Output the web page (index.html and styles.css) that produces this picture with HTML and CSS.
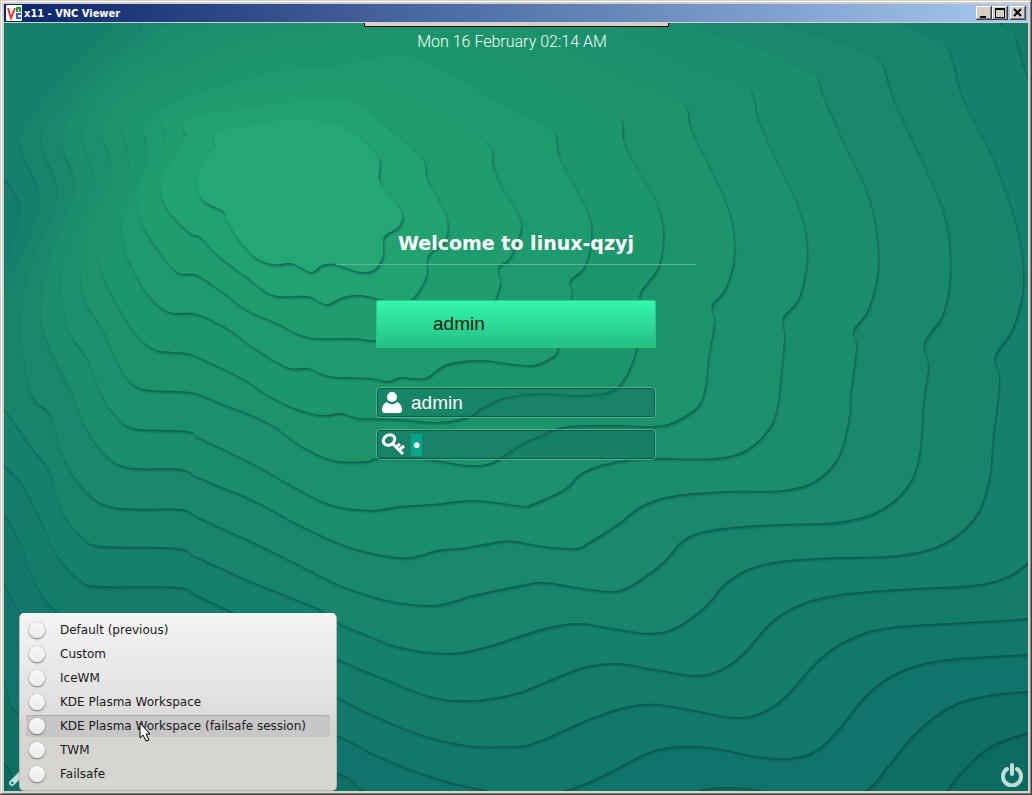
FILE: index.html
```html
<!DOCTYPE html>
<html lang="en">
<head>
    <meta charset="UTF-8">
    <title>x11 - VNC Viewer</title>
    <link rel="stylesheet" href="styles.css">
</head>

<body>
    <div class="window">
        <header class="titlebar">
            <svg class="logo" viewBox="0 0 16 16" aria-hidden="true">
                <rect width="16" height="16" rx="1" fill="#fff" />
                <path d="M2 3l3 10 4-10" fill="none" stroke="#f03030" stroke-width="2" />
                <path d="M11 7V3h3v4" fill="none" stroke="#18a030" stroke-width="2" />
                <path d="M15 9h-4v4h4" fill="none" stroke="#3060e8" stroke-width="2" />
            </svg>
            <h1>x11 - VNC Viewer</h1>
            <div class="window-buttons">
                <button type="button" aria-label="Minimize"><svg viewBox="0 0 12 10"><path d="M2 9h6" /></svg></button>
                <button type="button" aria-label="Maximize"><svg viewBox="0 0 12 10"><path d="M1 1h9M1 0v9h9V0" stroke-width="1" transform="translate(.5 .5)" /><path d="M1 1h10" /></svg></button>
                <button type="button" class="close" aria-label="Close"><svg viewBox="0 0 12 10"><path d="M2 1l7 7M9 1l-7 7" /></svg></button>
            </div>
        </header>

        <main class="desktop">
            <svg class="wallpaper" viewBox="4 23 1024 768" preserveAspectRatio="xMidYMid slice" aria-hidden="true"></svg>
            <div class="viewer-tab"></div>
            <p class="clock">Mon 16 February 02:14 AM</p>

            <form class="login">
                <h2>Welcome to linux-qzyj</h2>
                <button type="button" class="user">admin</button>
                <label class="field">
                    <svg viewBox="0 0 24 24" aria-label="User name">
                        <circle cx="11" cy="6" r="5" />
                        <path d="M6 11c3 3 7 3 10 0 3 1 5 4 5 8 0 2-1 3-3 3H4c-2 0-3-1-3-3 0-4 2-7 5-8z" />
                    </svg>
                    <input type="text" value="admin">
                </label>
                <label class="field">
                    <svg viewBox="0 0 24 24" aria-label="Password">
                        <ellipse cx="8" cy="7" rx="6" ry="5" transform="rotate(-35 8 7)" fill="none" stroke="#fff" stroke-width="3" />
                        <path d="M11 10l11 11M18 17l5-4M15 14l4-3" fill="none" stroke="#fff" stroke-width="3" />
                    </svg>
                    <input type="password" class="password" value="a">
                </label>
            </form>

            <footer class="panel">
                <button type="button" aria-label="Session type">
                    <svg viewBox="0 0 24 24"><path d="M4 20L20 4" stroke-width="6" /><circle cx="4" cy="20" r="1" class="hole" /></svg>
                </button>
                <button type="button" aria-label="Shut down">
                    <svg viewBox="0 0 24 24"><path d="M7 6a9 9 0 1 0 10 0M12 2v9" stroke-width="4" /></svg>
                </button>
            </footer>

            <div class="menu" role="group" aria-label="Session type">
                <label><input type="radio" name="session">Default (previous)</label>
                <label><input type="radio" name="session">Custom</label>
                <label><input type="radio" name="session">IceWM</label>
                <label><input type="radio" name="session">KDE Plasma Workspace</label>
                <label class="active"><input type="radio" name="session">KDE Plasma Workspace (failsafe session)</label>
                <label><input type="radio" name="session">TWM</label>
                <label><input type="radio" name="session">Failsafe</label>
                <svg class="pointer" viewBox="0 0 12 20" aria-hidden="true">
                    <path d="M1 1v15l3-3 3 6 3-1-3-6h4z" fill="#fff" stroke="#000" />
                </svg>
            </div>
        </main>
    </div>
    <script src="wallpaper.js"></script>
</body>
</html>
```
FILE: styles.css
```css
* {
    box-sizing: border-box;
}

body {
    margin: 0;
}

button {
    border: none;
    padding: 0;
}

.window {
    display: flex;
    flex-direction: column;
    height: 100vh;
    padding: 4px;
    background-color: #d4d0c8;
    box-shadow: inset -1px -1px #404040, inset 1px 1px #d4d0c8, inset -2px -2px #808080, inset 2px 2px #ffffff;
}

.titlebar {
    display: flex;
    align-items: center;
    height: 18px;
    padding: 0 2px;
    margin-bottom: 1px;
    background: linear-gradient(to right, #0a246a, #a6caf0);
}

.titlebar h1 {
    flex: 1;
    margin: 0 0 0 2px;
    font: bold 11px "DejaVu Sans Condensed", "DejaVu Sans", sans-serif;
    color: #ffffff;
}

.logo {
    width: 16px;
    height: 16px;
}

.window-buttons {
    display: flex;
}

.window-buttons button {
    width: 16px;
    height: 14px;
    padding: 1px;
    background-color: #d4d0c8;
    box-shadow: inset -1px -1px #404040, inset 1px 1px #ffffff, inset -2px -2px #808080;
}

.window-buttons .close {
    margin-left: 2px;
}

.window-buttons svg {
    display: block;
    width: 12px;
    height: 10px;
    margin-left: 1px;
    fill: none;
    stroke: #000000;
    stroke-width: 2;
}

.desktop {
    position: relative;
    flex: 1;
    display: flex;
    flex-direction: column;
    align-items: center;
    overflow: hidden;
    background-color: #0c6b61;
}

.wallpaper {
    position: absolute;
    inset: 0;
    width: 100%;
    height: 100%;
}

.wallpaper path {
    filter: drop-shadow(1px 2px 1px rgba(0, 64, 60, 0.6));
}

.viewer-tab,
.clock,
.login,
.panel {
    position: relative;
}

.viewer-tab {
    width: 305px;
    height: 4px;
    border: 1px solid #000000;
    border-top: none;
    background-color: #d4d0c8;
}

.clock {
    margin: 4px 8px 0 0;
    font: 300 16px/22px Roboto, sans-serif;
    color: #f0fff8;
}

.login {
    display: flex;
    flex-direction: column;
    align-items: center;
    gap: 12px;
    width: 360px;
    margin-top: 176px;
}

.login h2 {
    width: 100%;
    margin: 0 0 23px;
    padding-bottom: 7px;
    border-bottom: 1px solid #5db796;
    font: bold 19px/28px "DejaVu Sans", sans-serif;
    text-align: center;
    color: #ffffff;
}

.user {
    width: 280px;
    height: 48px;
    margin-bottom: 27px;
    padding-left: 56px;
    border: 1px solid #28c88c;
    border-radius: 2px;
    background: linear-gradient(#34f6ab, #25bf84);
    font: 19px "Liberation Sans", sans-serif;
    text-align: left;
    color: #061a12;
}

.field {
    display: flex;
    align-items: center;
    gap: 6px;
    width: 280px;
    height: 31px;
    padding: 0 4px;
    border: 1px solid #4fae8d;
    border-radius: 4px;
    background-color: rgba(18, 110, 98, 0.45);
    box-shadow: inset 0 0 1px 1px rgba(0, 70, 55, 0.6);
}

.field + .field {
    margin-top: -1px;
}

.field svg {
    width: 24px;
    height: 24px;
    fill: #ffffff;
}

.field input {
    flex: 1;
    min-width: 0;
    padding: 0;
    border: none;
    outline: none;
    background: none;
    font: 19px "Liberation Sans", sans-serif;
    color: #ffffff;
    caret-color: transparent;
}

.field .password {
    font-family: "DejaVu Sans", sans-serif;
}

.field input::selection {
    background-color: #08a58c;
    color: #ffffff;
}

.panel {
    display: flex;
    justify-content: space-between;
    width: 100%;
    margin-top: auto;
    padding: 4px;
}

.panel button {
    background: none;
}

.panel svg {
    display: block;
    width: 24px;
    height: 24px;
    fill: none;
    stroke: #c0ded8;
    stroke-linecap: round;
}

.panel .hole {
    stroke: #0c6b61;
}

.menu {
    position: absolute;
    left: 15px;
    bottom: 0;
    display: flex;
    flex-direction: column;
    gap: 2px;
    width: 318px;
    padding: 5px 6px;
    border: 1px solid #b8b8b8;
    border-top-color: #ffffff;
    border-radius: 5px;
    background: linear-gradient(#f4f4f4, #e2e1e1 50%, #d6d5d1 65%, #d6d6d0);
}

.menu label {
    display: flex;
    align-items: center;
    gap: 15px;
    height: 22px;
    padding-left: 3px;
    border-radius: 3px;
    font: 12px "DejaVu Sans", sans-serif;
    color: #1a1a1a;
}

.menu .active {
    background-color: #c9c6c8;
    box-shadow: inset 0 1px 1px #aaa7aa;
}

.menu input {
    appearance: none;
    width: 16px;
    height: 16px;
    margin: 0;
    border-radius: 50%;
    background: linear-gradient(#f8f8f8, #ececee);
    box-shadow: 0 0 1px #808080, 0 1px 2px #707070;
}

.pointer {
    position: absolute;
    left: 119px;
    top: 108px;
    width: 12px;
    height: 20px;
}
```
FILE: wallpaper.js
```javascript
// Height lines from the lowest layer up to the top of the hill: fill, then x,y pairs
const layers = [
    ["#0e7064", "-20,740 4,762 13,775 30,810 300,840 700,840 900,832 930,812 946,791 963,770 989,747 1028,732 1080,720 1080,-40 -40,-40"],
    ["#10746a", "-20,650 4,680 20,715 100,760 250,760 337,773 363,790 420,820 600,825 670,802 696,791 726,787 766,791 810,800 863,791 886,768 916,732 949,707 983,696 1028,691 1080,690 1080,-40 -40,-40"],
    ["#12786a", "-20,540 4,582 20,612 60,665 150,680 250,695 337,735 383,758 433,777 477,788 520,796 559,792 599,777 649,752 683,746 716,748 756,756 789,758 816,750 839,728 869,692 903,670 949,659 1028,654 1080,650 1080,-40 -40,-40"],
    ["#137c6b", "-20,480 4,513 20,542 33,578 53,608 90,625 180,628 250,660 337,697 367,712 417,733 467,745 516,746 536,742 559,732 599,715 629,706 656,704 689,709 733,717 759,713 783,698 816,662 843,642 883,628 949,623 1028,618 1080,610 1080,-40 -40,-40"],
    ["#15806b", "-20,440 4,465 23,485 40,518 57,555 80,580 100,586 177,587 197,595 233,612 285,635 337,659 383,678 433,697 473,700 516,693 549,680 583,667 616,663 649,668 696,675 723,668 746,650 773,620 806,602 849,593 916,588 973,585 1006,577 1028,562 1048,542 1080,490 1100,300 1050,130 1028,80 1019,53 1013,33 1001,25 940,-40 -40,-40 -30,120 3,175 15,193 21,210 17,230 5,263 -20,300"],
    ["#17846b", "-10,330 -14,385 7,412 30,445 50,472 63,512 83,538 103,546 177,548 197,557 253,582 317,608 337,622 360,632 400,647 447,653 480,648 516,637 549,627 579,623 613,628 649,633 676,627 703,608 729,580 763,564 816,558 899,555 946,542 976,515 989,478 993,435 998,395 999,377 995,356 1013,327 1023,283 1016,227 993,160 963,100 948,50 929,37 899,24 830,-20 160,-20 110,30 60,80 25,130 22,150 38,190 37,217 17,267"],
    ["#19886c", "42,143 57,187 53,213 33,260 22,307 23,353 33,397 50,415 63,455 83,488 113,507 180,509 200,518 253,542 300,565 340,585 387,600 427,605 450,602 473,595 516,586 543,582 583,588 613,591 633,584 663,562 686,538 723,528 783,524 836,522 876,512 906,488 919,455 923,402 928,367 924,343 943,313 950,267 943,213 916,150 893,100 881,63 863,52 823,37 786,25 730,-10 180,-10 140,30 90,70 50,120"],
    ["#1b8d6c", "62,143 74,177 72,203 53,250 42,300 43,330 57,363 73,395 83,422 103,452 127,467 180,469 200,478 253,500 300,525 350,547 397,557 420,555 437,550 467,547 500,541 516,541 543,546 576,548 589,542 616,525 643,505 676,495 729,491 783,490 816,480 839,455 849,415 850,395 856,347 853,331 869,307 878,260 869,200 843,143 823,97 816,77 799,67 763,50 706,32 690,22 660,2 600,-10 260,-10 220,0 170,23 110,70 75,110"],
    ["#1c906c", "82,133 92,167 92,180 80,217 62,263 62,300 70,333 88,360 103,397 113,412 133,428 187,431 200,438 250,462 300,490 333,505 370,510 400,506 433,504 473,500 516,505 526,506 546,498 566,488 583,472 613,462 649,458 716,458 749,448 771,425 778,402 779,393 784,340 783,318 799,297 807,253 799,210 779,167 759,123 751,92 736,80 696,67 659,52 619,27 590,10 350,5 220,22 140,60 95,100"],
    ["#1d936c", "103,133 111,160 107,187 90,220 81,267 85,300 103,330 120,367 140,388 190,392 213,400 267,422 300,445 333,460 367,461 377,458 420,458 467,465 490,463 507,453 523,443 537,437 563,427 607,425 653,426 673,422 697,407 705,387 708,360 713,330 714,320 712,305 726,287 734,253 729,213 709,167 691,130 686,107 673,97 649,87 613,70 576,52 536,33 510,25 400,20 267,35 180,66 120,100"],
    ["#1d966c", "123,133 128,153 127,177 110,210 100,247 102,273 115,300 137,335 157,350 187,353 200,358 240,377 273,398 300,410 323,415 340,413 360,418 397,419 437,422 467,417 483,407 507,397 540,393 573,395 597,394 616,388 629,370 636,348 642,310 640,293 658,267 663,233 656,203 639,173 624,143 621,120 609,112 559,90 516,67 467,43 400,33 333,40 267,50 217,70 167,92 132,113"],
    ["#1f9a6e", "143,130 147,143 147,160 137,187 125,213 122,233 130,263 150,297 170,312 197,314 230,330 253,347 287,367 308,368 320,373 337,377 370,378 388,381 400,377 413,378 427,377 447,364 480,360 507,363 533,365 550,358 558,348 571,300 570,281 584,267 591,240 589,217 576,190 559,157 554,133 536,122 516,112 467,83 420,60 383,57 333,67 277,71 233,83 187,97 157,113"],
    ["#209d6f", "163,118 165,133 163,150 147,173 139,200 142,223 157,248 177,272 197,275 227,295 247,310 277,323 308,337 353,338 370,340 400,341 440,343 470,340 485,325 495,300 500,283 498,268 510,257 520,233 519,217 503,190 493,167 490,147 467,128 427,107 393,83 363,78 317,82 263,87 233,93 190,106"],
    ["#22a171", "183,122 186,137 177,153 163,177 161,193 170,213 190,233 200,237 220,257 247,277 273,295 307,296 320,302 328,304 343,297 360,295 380,299 400,304 413,298 426,277 428,256 445,240 447,220 437,198 427,180 424,162 410,147 393,133 370,112 353,102 333,101 283,103 250,109 213,113"],
    ["#24a774", "216,133 253,125 290,120 333,123 350,130 367,145 379,160 379,180 388,193 402,213 398,227 384,237 383,255 375,269 362,272 347,268 335,264 322,265 312,272 302,268 290,263 272,264 255,257 237,237 227,220 223,211 203,200 197,183 203,163 215,147"]
];

// Closed smooth curve through all the points
function smoothPath(text) {
    const points = text.split(" ").map(pair => pair.split(",").map(Number));
    const at = i => points[(i + points.length) % points.length];
    let d = `M${points[0]}`;

    points.forEach((point, i) => {
        const next = at(i + 1);
        const c1 = [0, 1].map(k => point[k] + (next[k] - at(i - 1)[k]) / 6);
        const c2 = [0, 1].map(k => next[k] - (at(i + 2)[k] - point[k]) / 6);
        d += `C${c1} ${c2} ${next}`;
    });
    return d + "Z";
}

const wallpaper = document.querySelector(".wallpaper");

layers.forEach(([fill, points]) => {
    const path = document.createElementNS("http://www.w3.org/2000/svg", "path");
    path.setAttribute("d", smoothPath(points));
    path.setAttribute("fill", fill);
    wallpaper.appendChild(path);
});

document.querySelector(".password").select();
```
